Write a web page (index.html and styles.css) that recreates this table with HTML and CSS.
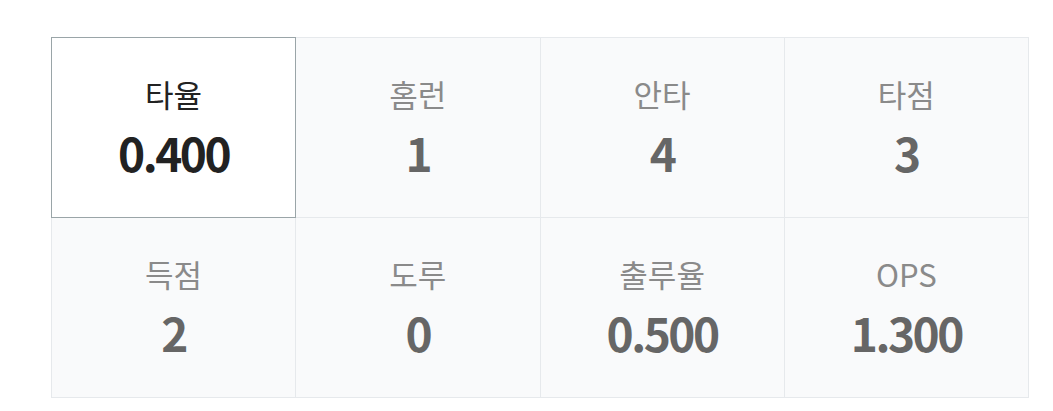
FILE: index.html
```html
<!DOCTYPE html>
<html lang="ko">
<head>
<meta charset="utf-8">
<link rel="stylesheet" href="styles.css">
</head>
<body>
<div class="stats">
  <div class="cell active"><div class="label">타율</div><div class="value">0.400</div></div>
  <div class="cell"><div class="label">홈런</div><div class="value">1</div></div>
  <div class="cell"><div class="label">안타</div><div class="value">4</div></div>
  <div class="cell"><div class="label">타점</div><div class="value">3</div></div>
  <div class="cell"><div class="label">득점</div><div class="value">2</div></div>
  <div class="cell"><div class="label">도루</div><div class="value">0</div></div>
  <div class="cell"><div class="label">출루율</div><div class="value">0.500</div></div>
  <div class="cell"><div class="label">OPS</div><div class="value">1.300</div></div>
</div>
</body>
</html>
```
FILE: styles.css
```css
html, body {
  margin: 0;
  padding: 0;
  background: #ffffff;
}
body {
  padding: 38px 0 0 52px;
  font-family: "Noto Sans CJK KR", "Noto Sans", sans-serif;
}
.stats {
  display: grid;
  grid-template-columns: repeat(4, 1fr);
  grid-template-rows: repeat(2, 180px);
  width: 977px;
}
.cell {
  margin: -1px 0 0 -1px;
  border: 1px solid #e6e9ec;
  background: #f9fafb;
  display: flex;
  flex-direction: column;
  align-items: center;
  justify-content: center;
  gap: 10px;
  padding-bottom: 2px;
}
.cell.active {
  position: relative;
  z-index: 1;
  background: #ffffff;
  border-color: #9aa5a8;
}
.label {
  font-size: 31px;
  line-height: 40px;
  color: #8a8a8a;
  font-weight: 400;
}
.value {
  font-size: 46px;
  line-height: 56px;
  font-weight: 700;
  color: #666666;
  letter-spacing: -2.5px;
}
.active .label { color: #222222; }
.active .value { color: #222222; }
```
